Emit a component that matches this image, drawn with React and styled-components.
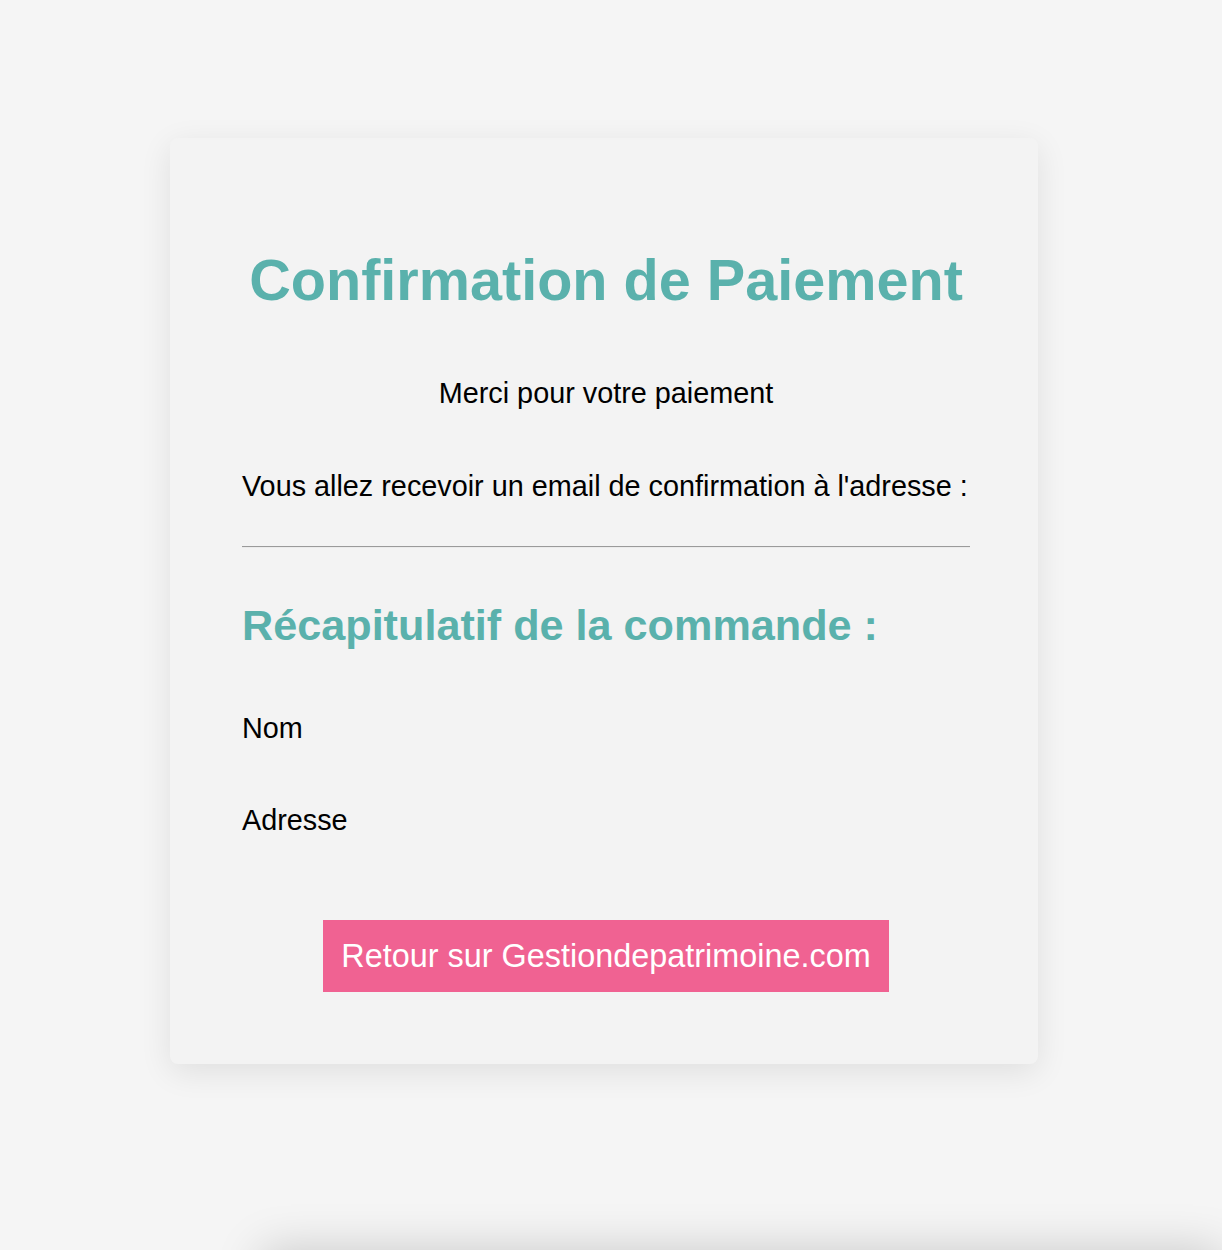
import styled, { createGlobalStyle } from 'styled-components';

const GlobalStyle = createGlobalStyle`
  html, body {
    margin: 0;
    padding: 0;
    background-color: #f5f5f5;
    font-family: "Liberation Sans", Arial, Helvetica, sans-serif;
    color: #000;
  }
`;

const Confirmation = () => {
  return (
    <>
      <GlobalStyle />
      <Page>
        <Card>
          <Title>Confirmation de Paiement</Title>
          <Text center>Merci pour votre paiement</Text>
          <Text mt={60}>Vous allez recevoir un email de confirmation à l'adresse :</Text>
          <Separator />
          <Subtitle>Récapitulatif de la commande :</Subtitle>
          <Text mt={62}>Nom</Text>
          <Text mt={59}>Adresse</Text>
          <Actions>
            <BackButton href="#">Retour sur Gestiondepatrimoine.com</BackButton>
          </Actions>
        </Card>
        <Footer />
      </Page>
    </>
  );
};

export default Confirmation;

const Page = styled.div`
  display: flex;
  flex-direction: column;
  align-items: center;
  padding-top: 138px;
  padding-right: 14px;
`;

const Card = styled.div`
  width: 868px;
  box-sizing: border-box;
  padding: 70px 68px 72px 72px;
  background-color: #f3f3f3;
  border-radius: 8px;
  box-shadow: 0 8px 32px rgba(0, 0, 0, 0.09);
`;

const Title = styled.h1`
  margin: 39px 0 0;
  font-size: 57.6px;
  line-height: 66px;
  font-weight: bold;
  color: #5ab1ac;
  text-align: center;
`;

const Text = styled.p`
  margin: ${(p) => (p.mt !== undefined ? p.mt : 64)}px 0 0;
  font-size: 28.8px;
  line-height: 33px;
  text-align: ${(p) => (p.center ? 'center' : 'left')};
`;

const Separator = styled.hr`
  margin: 43px 0 0;
  border: none;
  border-top: 1px solid #9a9a9a;
  border-bottom: 1px solid #ebebeb;
  height: 0;
`;

const Subtitle = styled.h2`
  margin: 52px 0 0;
  font-size: 43.2px;
  line-height: 50px;
  font-weight: bold;
  color: #5ab1ac;
`;

const Actions = styled.div`
  display: flex;
  justify-content: center;
  margin-top: 83px;
`;

const BackButton = styled.a`
  display: block;
  box-sizing: border-box;
  height: 72px;
  padding: 0 18px;
  background-color: #f06292;
  color: #fff;
  font-size: 32.4px;
  line-height: 72px;
  text-decoration: none;
`;

const Footer = styled.div`
  align-self: flex-end;
  width: 960px;
  height: 200px;
  margin-top: 186px;
  margin-right: -14px;
  background-color: #f5f5f5;
  box-shadow: 0 0 44px rgba(0, 0, 0, 0.18);
`;
